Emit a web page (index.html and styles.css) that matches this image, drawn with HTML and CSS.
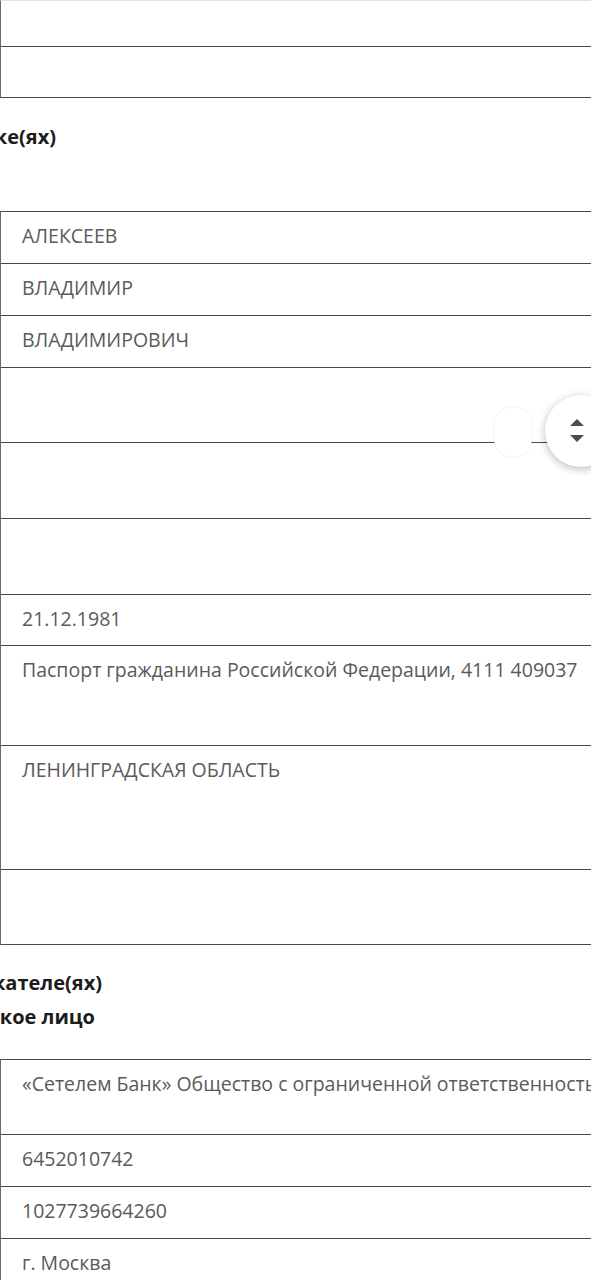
FILE: index.html
```html
<!DOCTYPE html>
<html lang="ru">
<head>
<meta charset="utf-8">
<title>Сведения</title>
<link rel="stylesheet" href="styles.css">
</head>
<body>
<div class="page">
  <div class="table table-top">
    <div class="row h45"></div>
    <div class="row h52 last"></div>
  </div>

  <div class="heading h1">
    <div class="line"><span>Сведения о должнике(ях)</span></div>
  </div>

  <div class="table">
    <div class="row h52"><span class="val">АЛЕКСЕЕВ</span></div>
    <div class="row h52"><span class="val">ВЛАДИМИР</span></div>
    <div class="row h52"><span class="val">ВЛАДИМИРОВИЧ</span></div>
    <div class="row h75"></div>
    <div class="row h76"></div>
    <div class="row h76"></div>
    <div class="row h51"><span class="val">21.12.1981</span></div>
    <div class="row h100"><span class="val">Паспорт гражданина Российской Федерации, 4111 409037</span></div>
    <div class="row h124"><span class="val">ЛЕНИНГРАДСКАЯ ОБЛАСТЬ</span></div>
    <div class="row h76 last"></div>
  </div>

  <div class="heading h2">
    <div class="line l1"><span>Сведения о взыскателе(ях)</span></div>
    <div class="line l2"><span>Юридическое лицо</span></div>
  </div>

  <div class="table">
    <div class="row h75"><span class="val nowrap">«Сетелем Банк» Общество с ограниченной ответственностью</span></div>
    <div class="row h52"><span class="val">6452010742</span></div>
    <div class="row h52"><span class="val">1027739664260</span></div>
    <div class="row h52"><span class="val">г. Москва</span></div>
    <div class="row h52"></div>
  </div>
</div>

<div class="ghost"></div>
<button class="scroll-btn" aria-label="Прокрутка">
  <svg width="16" height="32" viewBox="0 0 16 32">
    <path d="M1 11 L8 4 L15 11 Z" fill="#4d4d4d"/>
    <path d="M1 20 L8 27 L15 20 Z" fill="#4d4d4d"/>
  </svg>
</button>
</body>
</html>
```
FILE: styles.css
```css
html, body {
  margin: 0;
  padding: 0;
  background: #ffffff;
  overflow: hidden;
}
body {
  width: 591px;
  height: 1280px;
  position: relative;
  font-family: "Open Sans", "Noto Sans", sans-serif;
}
.page {
  width: 591px;
}
.table {
  width: 800px;
  border-left: 1px solid #6a6a6a;
  box-sizing: border-box;
}
.table-top {
  border-top: 1px solid #e2e2e2;
}
.row {
  box-sizing: border-box;
  border-top: 1px solid #4a4a4a;
  padding: 11px 0 0 21px;
}
.table-top .row:first-child {
  border-top: none;
}
.row.last {
  border-bottom: 1px solid #4a4a4a;
}
.h45 { height: 45px; }
.h51 { height: 51px; }
.h52 { height: 52px; }
.h75 { height: 75px; }
.h76 { height: 76px; }
.h100 { height: 100px; }
.h124 { height: 124px; }

.val {
  display: block;
  font-size: 19.5px;
  line-height: 26px;
  color: #5a5a5a;
}
.nowrap {
  white-space: nowrap;
}

.heading {
  font-weight: 700;
  font-size: 20px;
  line-height: 34px;
  color: #1c1c1c;
}
.heading .line {
  display: flex;
  justify-content: flex-end;
  white-space: nowrap;
}
.h1 {
  margin: 22px 0 57px;
}
.h1 .line { width: 56px; }
.h2 {
  margin: 21px 0 25px;
}
.h2 .l1 { width: 102px; }
.h2 .l2 { width: 95px; }

.ghost {
  position: absolute;
  left: 494px;
  top: 407px;
  width: 38px;
  height: 50px;
  border-radius: 19px;
  background: #ffffff;
  box-shadow: 0 0 2px rgba(0, 0, 0, 0.12);
}
.scroll-btn {
  position: absolute;
  left: 545px;
  top: 395px;
  width: 72px;
  height: 72px;
  border-radius: 50%;
  border: none;
  background: #ffffff;
  box-shadow: 0 2px 8px rgba(0, 0, 0, 0.28);
  padding: 0 0 0 24px;
  display: flex;
  align-items: center;
  justify-content: flex-start;
}
```
